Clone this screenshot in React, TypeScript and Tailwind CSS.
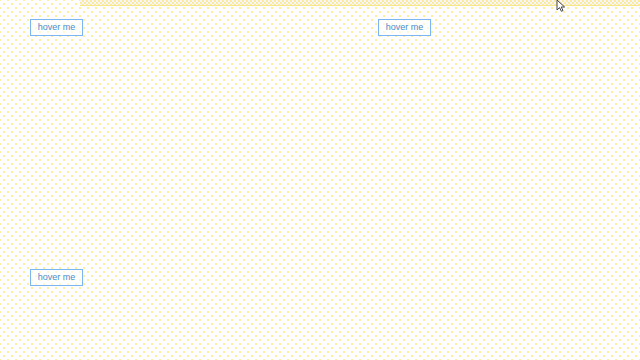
import React from 'react'

const HoverButton = () => (
  <button className="block h-[17px] w-[53px] border border-[#7cb6f2] bg-white/60 text-[9px] leading-none text-[#4a8bcc] [font-family:'Liberation_Sans',Arial,sans-serif]">
    hover me
  </button>
)

const App = () => {
  return (
    <div className="relative h-[360px] w-[640px] overflow-hidden bg-[#fdfdff] bg-[radial-gradient(circle,#fcee9a_0.7px,transparent_1px),radial-gradient(circle,#fcee9a_0.7px,transparent_1px)] bg-[length:8px_8px] bg-[position:0_0,4px_4px]">
      {/* strip along the top edge */}
      <div className="ml-[80px] h-[6px] border-b border-[#f7e68a] bg-[#f6f3fb] bg-[conic-gradient(#f9ec9c_25%,transparent_0_50%,#f9ec9c_0_75%,transparent_0)] bg-[length:4px_4px]" />

      <div className="flex gap-[295px] px-[30px] pt-[13px]">
        <HoverButton />
        <HoverButton />
      </div>

      <div className="px-[30px] pt-[233px]">
        <HoverButton />
      </div>

      {/* mouse pointer */}
      <svg className="absolute left-[556px] top-[-1px]" width="11" height="13" viewBox="0 0 11 13">
        <path d="M1 1 L1 11 L3.5 8.6 L5.4 12.3 L7 11.5 L5.2 8 L8.6 8 Z" fill="#fff" stroke="#444" strokeWidth="1" strokeLinejoin="round" />
      </svg>
    </div>
  )
}

export default App
